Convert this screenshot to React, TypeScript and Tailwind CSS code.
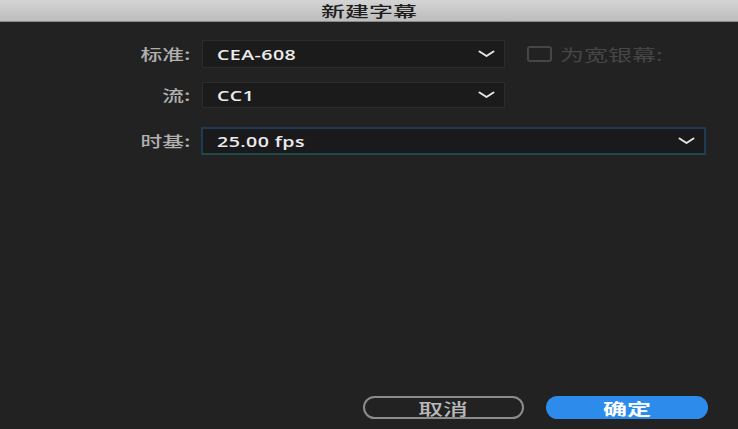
import React from "react";

const CJK = "font-['Noto_Sans_CJK_SC','Noto_Sans',sans-serif]";
const LAT = "font-['Open_Sans','Noto_Sans_CJK_SC',sans-serif]";

function Chevron() {
  return (
    <svg width="17" height="8" viewBox="0 0 17 8" className="shrink-0">
      <path d="M1.5 1.5 L8.5 6 L15.5 1.5" fill="none" stroke="#e6e6e6" strokeWidth="2" strokeLinecap="round" strokeLinejoin="round" />
    </svg>
  );
}

function Select({ value, focused, className }: { value: string; focused?: boolean; className: string }) {
  return (
    <div
      className={`${className} flex items-center justify-between pl-[14px] pr-[9px] ${
        focused
          ? "bg-[#1a1a1c] border-2 border-[#1e3a55] border-b-[#1f4a48]"
          : "bg-[#1b1b1b] border border-[#2c2c2c]"
      }`}
    >
      <span className={`${LAT} inline-block origin-left scale-x-[1.4] text-[14px] font-semibold text-[#ececec] tracking-[0.3px]`}>
        {value}
      </span>
      <Chevron />
    </div>
  );
}

function Label({ text }: { text: string }) {
  return (
    <div className="w-[190px] shrink-0 flex justify-end">
      <span className={`${CJK} inline-block origin-right scale-x-[1.45] text-[15px] font-medium text-[#b0b0b0]`}>{text}</span>
    </div>
  );
}

export default function App() {
  return (
    <div className="w-[738px] h-[429px] bg-[#222222] flex flex-col overflow-hidden">
      <div className="h-[22px] shrink-0 bg-gradient-to-b from-[#d4d4d4] to-[#bdbdbd] border-b border-[#8a8a8a] flex items-center justify-center">
        <span className={`${CJK} block w-[66px] text-center scale-x-[1.6] text-[15px] leading-[17px] font-medium text-[#1e1e1e]`}>新建字幕</span>
      </div>
      <div className="flex-1 flex flex-col pt-[18px]">
        <div className="flex items-center h-[28px]">
          <Label text="标准:" />
          <Select value="CEA-608" className="ml-[12px] w-[303px] h-[28px]" />
          <div className="ml-[22px] flex items-center">
            <div className="w-[25px] h-[16px] border-2 border-[#464646] rounded-[3px]" />
            <span className={`${CJK} inline-block origin-left scale-x-[1.5] ml-[8px] text-[16px] text-[#464646]`}>为宽银幕:</span>
          </div>
        </div>
        <div className="flex items-center h-[26px] mt-[14px]">
          <Label text="流:" />
          <Select value="CC1" className="ml-[12px] w-[303px] h-[26px]" />
        </div>
        <div className="flex items-center h-[28px] mt-[19px]">
          <Label text="时基:" />
          <Select value="25.00 fps" focused className="ml-[11px] w-[505px] h-[28px]" />
        </div>
        <div className="flex-1" />
        <div className="flex justify-end gap-[22px] pr-[30px] pb-[10px]">
          <button className={`${CJK} w-[161px] h-[23px] rounded-full border-2 border-[#8c8c8c] flex items-center justify-center`}>
            <span className="inline-block scale-x-[1.55] text-[16px] font-medium text-[#b8b8b8] leading-none">取消</span>
          </button>
          <button className={`${CJK} w-[162px] h-[23px] rounded-full bg-[#2d8ceb] flex items-center justify-center`}>
            <span className="inline-block scale-x-[1.5] text-[16px] font-bold text-white leading-none">确定</span>
          </button>
        </div>
      </div>
    </div>
  );
}
